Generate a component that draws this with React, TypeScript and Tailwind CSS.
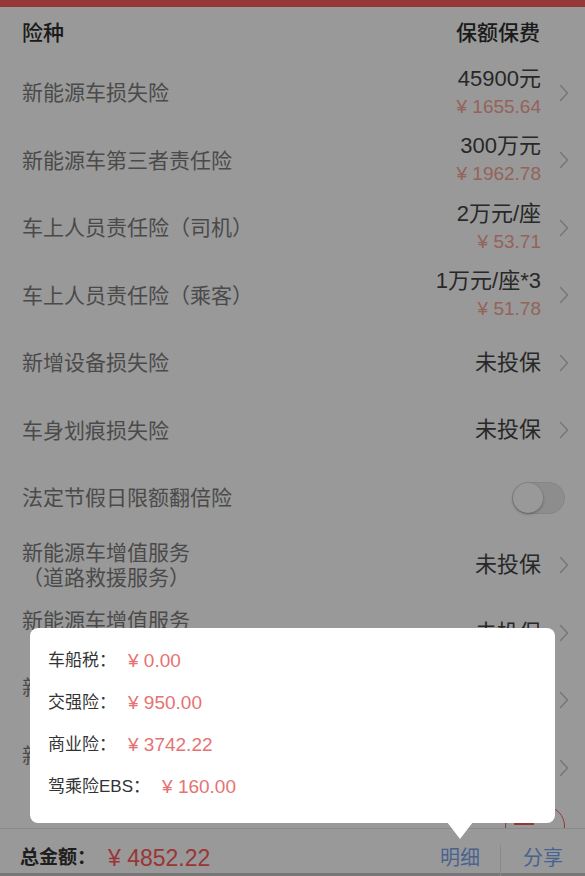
import React from "react";

type Row = {
  label: string;
  sub?: string;
  value?: string;
  price?: string;
  toggle?: boolean;
};

const rows: Row[] = [
  { label: "新能源车损失险", value: "45900元", price: "¥ 1655.64" },
  { label: "新能源车第三者责任险", value: "300万元", price: "¥ 1962.78" },
  { label: "车上人员责任险（司机）", value: "2万元/座", price: "¥ 53.71" },
  { label: "车上人员责任险（乘客）", value: "1万元/座*3", price: "¥ 51.78" },
  { label: "新增设备损失险", value: "未投保" },
  { label: "车身划痕损失险", value: "未投保" },
  { label: "法定节假日限额翻倍险", toggle: true },
  { label: "新能源车增值服务", sub: "（道路救援服务）", value: "未投保" },
  { label: "新能源车增值服务", sub: "（代为驾驶服务）", value: "未投保" },
  { label: "新能源车增值服务", sub: "（安全检测服务）", value: "未投保" },
  { label: "新能源车增值服务", sub: "（代为送检服务）", value: "未投保" },
];

function Chevron() {
  return (
    <svg width="10" height="18" viewBox="0 0 10 18" className="shrink-0">
      <polyline
        points="1.5,1.5 8.5,9 1.5,16.5"
        fill="none"
        stroke="#c4c4c4"
        strokeWidth="1.4"
        strokeLinecap="round"
        strokeLinejoin="round"
      />
    </svg>
  );
}

function Toggle() {
  return (
    <div className="relative w-[53px] h-[32px] rounded-full bg-[#ececec] border border-[#dedede]">
      <div className="absolute left-0 top-0 w-[30px] h-[30px] rounded-full bg-white shadow-[0_1px_3px_rgba(0,0,0,0.35)]" />
    </div>
  );
}

const detail = [
  { k: "车船税：", v: "¥ 0.00" },
  { k: "交强险：", v: "¥ 950.00" },
  { k: "商业险：", v: "¥ 3742.22" },
  { k: "驾乘险EBS：", v: "¥ 160.00" },
];

export default function App() {
  return (
    <div className="relative w-full h-[876px] overflow-hidden bg-white font-['Liberation_Sans','Noto_Sans_CJK_SC',sans-serif]">
      <div className="flex flex-col h-full">
        <div className="h-[7px] shrink-0 bg-[#fa5c5c]" />
        <div className="flex-1 overflow-hidden">
          <div className="h-[52px] flex items-center justify-between pl-[22px] pr-[45px] text-[21px] font-medium text-[#2e2e2e]">
            <span>险种</span>
            <span>保额保费</span>
          </div>
          {rows.map((r, i) => (
            <div key={i} className="h-[67.5px] flex items-center justify-between pl-[22px]">
              <div className="text-[21px] text-[#7c7c7c] leading-[25px]">
                <div>{r.label}</div>
                {r.sub && <div>{r.sub}</div>}
              </div>
              {r.toggle ? (
                <div className="pr-[20px]">
                  <Toggle />
                </div>
              ) : (
                <div className="flex items-center pr-[16px]">
                  <div className="flex flex-col items-end">
                    <span className="text-[22px] leading-[28px] text-[#444]">{r.value}</span>
                    {r.price && (
                      <span className="text-[19px] leading-[28px] text-[#f7a597]">{r.price}</span>
                    )}
                  </div>
                  <div className="ml-[18px]">
                    <Chevron />
                  </div>
                </div>
              )}
            </div>
          ))}
          <div className="h-[67.5px] flex justify-end items-start pt-[4px] pr-[20px]">
            <div className="w-[60px] h-[40px] rounded-full border border-[#fa5c5c] flex items-center justify-center">
              <div className="w-[20px] h-[2px] -ml-[22px] -mt-[4px] bg-[#fa5c5c]" />
            </div>
          </div>
        </div>
        <div className="h-[48px] shrink-0 flex items-center border-t border-[#e6e6e6] border-b-[3px] border-b-[#c6c6c6] pt-[14px] bg-white">
          <div className="flex items-center pl-[20px] flex-1">
            <span className="text-[19px] font-bold text-[#333]">总金额：</span>
            <span className="ml-[12px] text-[23px] text-[#ff5a5a]">¥ 4852.22</span>
          </div>
          <div className="w-[80px] text-center text-[20px] text-[#7aa5f0]">明细</div>
          <div className="w-px h-[40px] -mb-[14px] bg-[#e4e4e4]" />
          <div className="w-[84px] text-center text-[20px] text-[#7aa5f0]">分享</div>
        </div>
      </div>

      <div className="absolute inset-0 bg-black/40" />

      <div className="absolute left-[30px] top-[628px] w-[525px] h-[195px] rounded-[8px] bg-white pt-[12px] pl-[18px]">
        {detail.map((d) => (
          <div key={d.k} className="h-[42px] flex items-center gap-[12px]">
            <span className="text-[17px] text-[#333]">{d.k}</span>
            <span className="text-[19px] text-[#e57373]">{d.v}</span>
          </div>
        ))}
        <div className="absolute left-[417px] top-[194px] w-0 h-0 border-l-[13px] border-r-[13px] border-t-[17px] border-l-transparent border-r-transparent border-t-white" />
      </div>
    </div>
  );
}
